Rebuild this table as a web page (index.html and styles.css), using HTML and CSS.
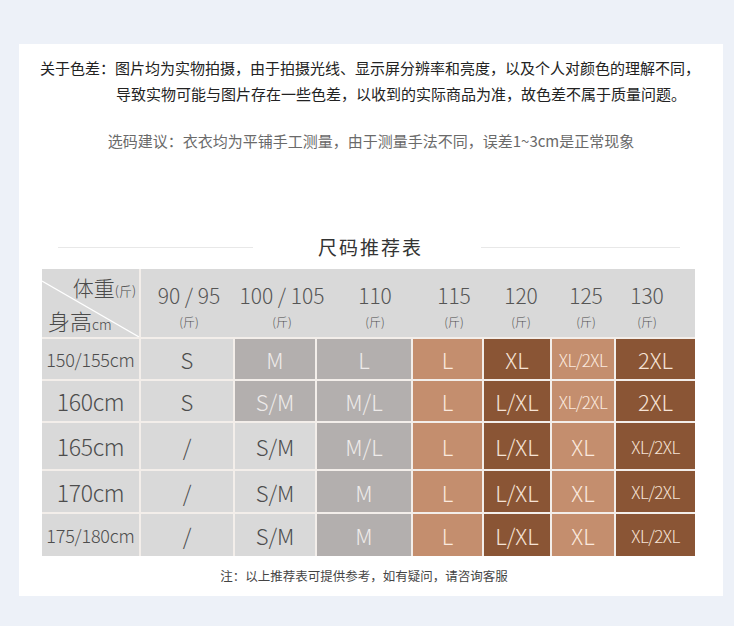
FILE: index.html
```html
<!DOCTYPE html>
<html lang="zh-CN">
<head>
<meta charset="utf-8">
<title>尺码推荐表</title>
<link rel="stylesheet" href="styles.css">
</head>
<body>
<div class="card">
  <p class="note">关于色差：图片均为实物拍摄，由于拍摄光线、显示屏分辨率和亮度，以及个人对颜色的理解不同，</p>
  <p class="note indent">导致实物可能与图片存在一些色差，以收到的实际商品为准，故色差不属于质量问题。</p>
  <p class="tip">选码建议：衣衣均为平铺手工测量，由于测量手法不同，误差1~3cm是正常现象</p>

  <div class="title-row">
    <span class="rule rule-left"></span>
    <h2 class="title">尺码推荐表</h2>
    <span class="rule rule-right"></span>
  </div>

  <div class="chart">
    <div class="corner">
      <svg class="diag" width="97" height="68" viewBox="0 0 97 68"><line x1="0" y1="12" x2="97" y2="68" stroke="#ffffff" stroke-width="1.2"/></svg>
      <div class="c-top">体重<small>(斤)</small></div>
      <div class="c-bot">身高<small>cm</small></div>
    </div>
    <div class="hband">
      <div class="hl"><span class="num">90 / 95</span><span class="unit">(斤)</span></div>
      <div class="hl"><span class="num">100 / 105</span><span class="unit">(斤)</span></div>
      <div class="hl"><span class="num">110</span><span class="unit">(斤)</span></div>
      <div class="hl"><span class="num">115</span><span class="unit">(斤)</span></div>
      <div class="hl"><span class="num">120</span><span class="unit">(斤)</span></div>
      <div class="hl"><span class="num">125</span><span class="unit">(斤)</span></div>
      <div class="hl"><span class="num">130</span><span class="unit">(斤)</span></div>
    </div>

    <div class="cell lg rh small-h">150/155cm</div>
    <div class="cell lg">S</div>
    <div class="cell mg">M</div>
    <div class="cell mg">L</div>
    <div class="cell tan">L</div>
    <div class="cell dk">XL</div>
    <div class="cell tan sm">XL/2XL</div>
    <div class="cell dk">2XL</div>

    <div class="cell lg rh">160cm</div>
    <div class="cell lg">S</div>
    <div class="cell mg">S/M</div>
    <div class="cell mg">M/L</div>
    <div class="cell tan">L</div>
    <div class="cell dk">L/XL</div>
    <div class="cell tan sm">XL/2XL</div>
    <div class="cell dk">2XL</div>

    <div class="cell lg rh">165cm</div>
    <div class="cell lg">/</div>
    <div class="cell lg">S/M</div>
    <div class="cell mg">M/L</div>
    <div class="cell tan">L</div>
    <div class="cell dk">L/XL</div>
    <div class="cell tan">XL</div>
    <div class="cell dk sm">XL/2XL</div>

    <div class="cell lg rh">170cm</div>
    <div class="cell lg">/</div>
    <div class="cell lg">S/M</div>
    <div class="cell mg">M</div>
    <div class="cell tan">L</div>
    <div class="cell dk">L/XL</div>
    <div class="cell tan">XL</div>
    <div class="cell dk sm">XL/2XL</div>

    <div class="cell lg rh small-h">175/180cm</div>
    <div class="cell lg">/</div>
    <div class="cell lg">S/M</div>
    <div class="cell mg">M</div>
    <div class="cell tan">L</div>
    <div class="cell dk">L/XL</div>
    <div class="cell tan">XL</div>
    <div class="cell dk sm">XL/2XL</div>
  </div>

  <p class="foot">注：以上推荐表可提供参考，如有疑问，请咨询客服</p>
</div>
</body>
</html>
```

FILE: styles.css
```css
html, body {
  margin: 0;
  padding: 0;
  background: #edf1f8;
}

body {
  font-family: "Noto Sans CJK SC", "Noto Sans", sans-serif;
  width: 734px;
  height: 626px;
  overflow: hidden;
}

.card {
  box-sizing: border-box;
  margin: 44px 0 0 19px;
  width: 704px;
  height: 552px;
  background: #ffffff;
  padding-top: 11px;
}

.note {
  margin: 0;
  padding-left: 21px;
  font-size: 15px;
  line-height: 26px;
  color: #222222;
  white-space: nowrap;
}

.note.indent {
  padding-left: 97px;
}

.tip {
  margin: 21px 0 0;
  text-align: center;
  font-size: 15px;
  line-height: 26px;
  color: #6a6a6a;
  white-space: nowrap;
}

.title-row {
  margin-top: 78px;
  display: flex;
  align-items: center;
  padding-left: 39px;
  height: 30px;
}

.rule {
  display: block;
  height: 1px;
  background: #e8e8e8;
}

.rule-left {
  width: 195px;
  margin-right: 65px;
}

.rule-right {
  width: 199px;
  margin-left: 58px;
}

.title {
  margin: 0;
  font-size: 19px;
  font-weight: 400;
  letter-spacing: 2px;
  line-height: 30px;
  color: #333333;
  white-space: nowrap;
}

.chart {
  margin: 7px 0 0 23px;
  width: 653px;
  display: grid;
  grid-template-columns: 97px 92px 80px 94px 69px 66px 62px 79px;
  grid-template-rows: 68px 40px 40px 46px 41px 42px;
  gap: 2px;
  background: #f3eeea;
  font-weight: 300;
}

.corner {
  position: relative;
  background: #d9d9d9;
  color: #4a4a4a;
}

.diag {
  position: absolute;
  left: 0;
  top: 0;
}

.c-top {
  margin-top: 5px;
  padding-right: 3px;
  text-align: right;
  font-size: 21px;
  line-height: 26px;
  white-space: nowrap;
}

.c-bot {
  margin-top: 3px;
  padding-left: 6px;
  font-size: 22px;
  line-height: 26px;
  white-space: nowrap;
}

.c-top small {
  font-size: 13px;
}

.c-bot small {
  font-size: 14px;
}

.hband {
  grid-column: 2 / -1;
  background: #d9d9d9;
  display: grid;
  grid-template-columns: 96px 90px 96px 62px 72px 58px 64px;
  color: #555555;
}

.hl {
  display: flex;
  flex-direction: column;
  align-items: center;
  padding-top: 12px;
  white-space: nowrap;
}

.num {
  font-size: 21px;
  line-height: 28px;
}

.unit {
  margin-top: 5px;
  font-size: 12px;
  line-height: 16px;
}

.cell {
  display: flex;
  align-items: center;
  justify-content: center;
  font-size: 22px;
  white-space: nowrap;
}

.cell.rh {
  font-size: 23px;
  letter-spacing: -0.3px;
}

.cell.rh.small-h {
  font-size: 18px;
  letter-spacing: -0.2px;
}

.cell.sm {
  font-size: 17px;
  letter-spacing: -0.6px;
}

.lg {
  background: #d9d9d9;
  color: #4d4d4d;
}

.mg {
  background: #b3afae;
  color: #eeebea;
}

.tan {
  background: #c48e6e;
  color: #fbe9de;
}

.dk {
  background: #8a5535;
  color: #f6e3d6;
}

.foot {
  margin: 10px 0 0;
  padding-right: 14px;
  text-align: center;
  font-size: 12.5px;
  line-height: 20px;
  color: #444444;
  white-space: nowrap;
}
```
